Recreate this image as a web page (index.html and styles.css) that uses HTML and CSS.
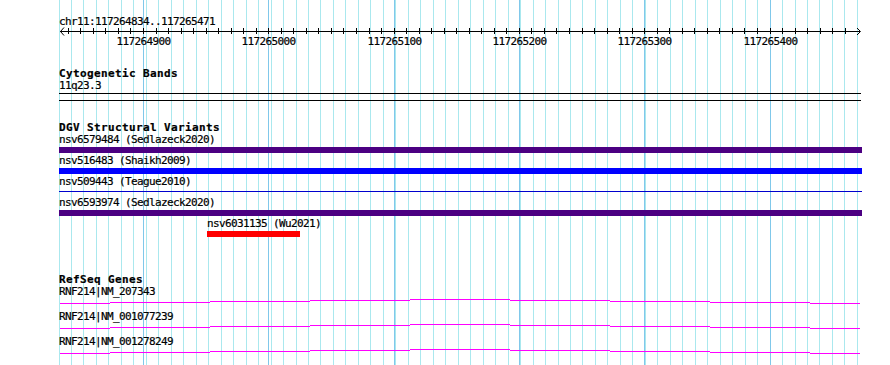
FILE: index.html
```html
<!DOCTYPE html>
<html lang="en">
<head>
  <meta charset="UTF-8">
  <meta name="viewport" content="width=device-width, initial-scale=1.0">
  <title>chr11:117264834..117265471</title>
  <link rel="stylesheet" href="styles.css">
</head>
<body>
  <div class="panel">
    <!-- grid lines sit under every track -->
    <svg class="grid" width="890" height="365" shape-rendering="crispEdges">
      <path class="minor" d="M59.5 0V365M71.5 0V365M83.5 0V365M96.5 0V365M108.5 0V365M121.5 0V365M133.5 0V365M146.5 0V365M158.5 0V365M171.5 0V365M183.5 0V365M196.5 0V365M208.5 0V365M221.5 0V365M233.5 0V365M246.5 0V365M258.5 0V365M271.5 0V365M283.5 0V365M296.5 0V365M308.5 0V365M320.5 0V365M333.5 0V365M345.5 0V365M358.5 0V365M370.5 0V365M383.5 0V365M395.5 0V365M408.5 0V365M420.5 0V365M433.5 0V365M445.5 0V365M458.5 0V365M470.5 0V365M483.5 0V365M495.5 0V365M508.5 0V365M520.5 0V365M533.5 0V365M545.5 0V365M558.5 0V365M570.5 0V365M582.5 0V365M595.5 0V365M607.5 0V365M620.5 0V365M632.5 0V365M645.5 0V365M657.5 0V365M670.5 0V365M682.5 0V365M695.5 0V365M707.5 0V365M720.5 0V365M732.5 0V365M745.5 0V365M757.5 0V365M770.5 0V365M782.5 0V365M795.5 0V365M807.5 0V365M819.5 0V365M832.5 0V365M844.5 0V365M857.5 0V365"/>
      <path class="major" d="M143.5 0V365M268.5 0V365M394.5 0V365M519.5 0V365M644.5 0V365M770.5 0V365"/>
    </svg>

    <div class="tracks">
      <div class="chrom">chr11:117264834..117265471</div>

      <svg class="ruler" width="890" height="26" shape-rendering="crispEdges">
        <path class="axis" d="M60 7.5H860"/>
        <path class="ticks" d="M68.5 4V10M80.5 4V10M93.5 4V10M105.5 4V10M118.5 4V10M130.5 4V10M143.5 4V10M156.5 4V10M168.5 4V10M181.5 4V10M193.5 4V10M206.5 4V10M218.5 4V10M231.5 4V10M243.5 4V10M256.5 4V10M268.5 4V10M281.5 4V10M293.5 4V10M306.5 4V10M318.5 4V10M331.5 4V10M343.5 4V10M356.5 4V10M369.5 4V10M381.5 4V10M394.5 4V10M406.5 4V10M419.5 4V10M431.5 4V10M444.5 4V10M456.5 4V10M469.5 4V10M481.5 4V10M494.5 4V10M506.5 4V10M519.5 4V10M531.5 4V10M544.5 4V10M556.5 4V10M569.5 4V10M582.5 4V10M594.5 4V10M607.5 4V10M619.5 4V10M632.5 4V10M644.5 4V10M657.5 4V10M669.5 4V10M682.5 4V10M694.5 4V10M707.5 4V10M719.5 4V10M732.5 4V10M744.5 4V10M757.5 4V10M770.5 4V10M782.5 4V10M795.5 4V10M807.5 4V10M820.5 4V10M832.5 4V10M845.5 4V10"/>
        <polyline class="arrow" shape-rendering="auto" points="64,3.5 60.5,7.5 64,11.5"/>
        <polyline class="arrow" shape-rendering="auto" points="857,4 860.5,7.5 857,11"/>
        <g class="ruler-labels">
          <text x="143.5" y="20.5">117264900</text>
          <text x="268.5" y="20.5">117265000</text>
          <text x="394.5" y="20.5">117265100</text>
          <text x="519.5" y="20.5">117265200</text>
          <text x="644.5" y="20.5">117265300</text>
          <text x="770.5" y="20.5">117265400</text>
        </g>
      </svg>

      <section class="track cyto">
        <h3 class="track-title">Cytogenetic Bands</h3>
        <div class="label">11q23.3</div>
        <div class="band"></div>
      </section>

      <section class="track dgv">
        <h3 class="track-title">DGV Structural Variants</h3>
        <div class="feat">
          <div class="label">nsv6579484 (Sedlazeck2020)</div>
          <div class="bar indigo"></div>
        </div>
        <div class="feat">
          <div class="label">nsv516483 (Shaikh2009)</div>
          <div class="bar blue"></div>
        </div>
        <div class="feat">
          <div class="label">nsv509443 (Teague2010)</div>
          <div class="bar thin"></div>
        </div>
        <div class="feat">
          <div class="label">nsv6593974 (Sedlazeck2020)</div>
          <div class="bar indigo"></div>
        </div>
        <div class="feat" style="margin-left: 148px;">
          <div class="label">nsv6031135 (Wu2021)</div>
          <div class="bar red" style="width: 93px;"></div>
        </div>
      </section>

      <section class="track refseq">
        <h3 class="track-title">RefSeq Genes</h3>
        <div class="gene">
          <div class="label">RNF214|NM_207343</div>
          <svg class="intron" width="803" height="13" shape-rendering="crispEdges">
            <path d="M1 5.5H51M51 4.5H151M151 3.5H251M251 2.5H351M351 1.5H451M451 2.5H551M551 3.5H651M651 4.5H751M751 5.5H801"/>
          </svg>
        </div>
        <div class="gene">
          <div class="label">RNF214|NM_001077239</div>
          <svg class="intron" width="803" height="13" shape-rendering="crispEdges">
            <path d="M1 5.5H51M51 4.5H151M151 3.5H251M251 2.5H351M351 1.5H451M451 2.5H551M551 3.5H651M651 4.5H751M751 5.5H801"/>
          </svg>
        </div>
        <div class="gene">
          <div class="label">RNF214|NM_001278249</div>
          <svg class="intron" width="803" height="13" shape-rendering="crispEdges">
            <path d="M1 5.5H51M51 4.5H151M151 3.5H251M251 2.5H351M351 1.5H451M451 2.5H551M551 3.5H651M651 4.5H751M751 5.5H801"/>
          </svg>
        </div>
      </section>
    </div>
  </div>
</body>
</html>
```

FILE: styles.css
```css
body {
  margin: 0;
  background: #fff;
}
.panel {
  position: relative;
  width: 890px;
  height: 365px;
  overflow: hidden;
  background: #fff;
}
.grid {
  position: absolute;
  left: 0;
  top: 0;
}
.grid path {
  fill: none;
  stroke-width: 1;
}
.grid .minor {
  stroke: #aae8ee;
}
.grid .major {
  stroke: #80c8ea;
}
.tracks {
  position: relative;
  padding-left: 59px;
  font: 11px/12px "DejaVu Sans Mono", monospace;
  letter-spacing: -0.62px;
  color: #000;
  -webkit-text-stroke: 0.2px #000;
}
.chrom {
  margin-top: 16px;
  height: 12px;
}
.ruler {
  display: block;
  margin: -4px 0 0 -59px;
  overflow: visible;
}
.ruler .axis,
.ruler .ticks,
.ruler .arrow {
  fill: none;
  stroke: #000;
  stroke-width: 1;
}
.ruler-labels text {
  font: 11px "DejaVu Sans Mono", monospace;
  letter-spacing: -0.62px;
  text-anchor: middle;
  fill: #000;
  stroke: #000;
  stroke-width: 0.2px;
}
.track-title {
  margin: 0;
  font-size: 11px;
  font-weight: bold;
  line-height: 12px;
  letter-spacing: 0.38px;
}
.label {
  height: 12px;
  white-space: nowrap;
}
.cyto {
  margin-top: 18px;
}
.band {
  margin-top: 1px;
  width: 802px;
  height: 6px;
  border-top: 1px solid #000;
  border-bottom: 1px solid #000;
}
.dgv {
  margin-top: 21px;
}
.feat {
  height: 21px;
}
.bar {
  margin-top: 1px;
  width: 803px;
  height: 6px;
}
.bar.indigo {
  background: #4b0082;
}
.bar.blue {
  background: #0000ff;
}
.bar.thin {
  margin-top: 3px;
  height: 1px;
  background: #0000cd;
}
.bar.red {
  background: #ff0000;
}
.refseq {
  margin-top: 35px;
}
.gene {
  height: 25px;
}
.intron {
  display: block;
}
.intron path {
  fill: none;
  stroke: #ff00ff;
  stroke-width: 1;
}
```
